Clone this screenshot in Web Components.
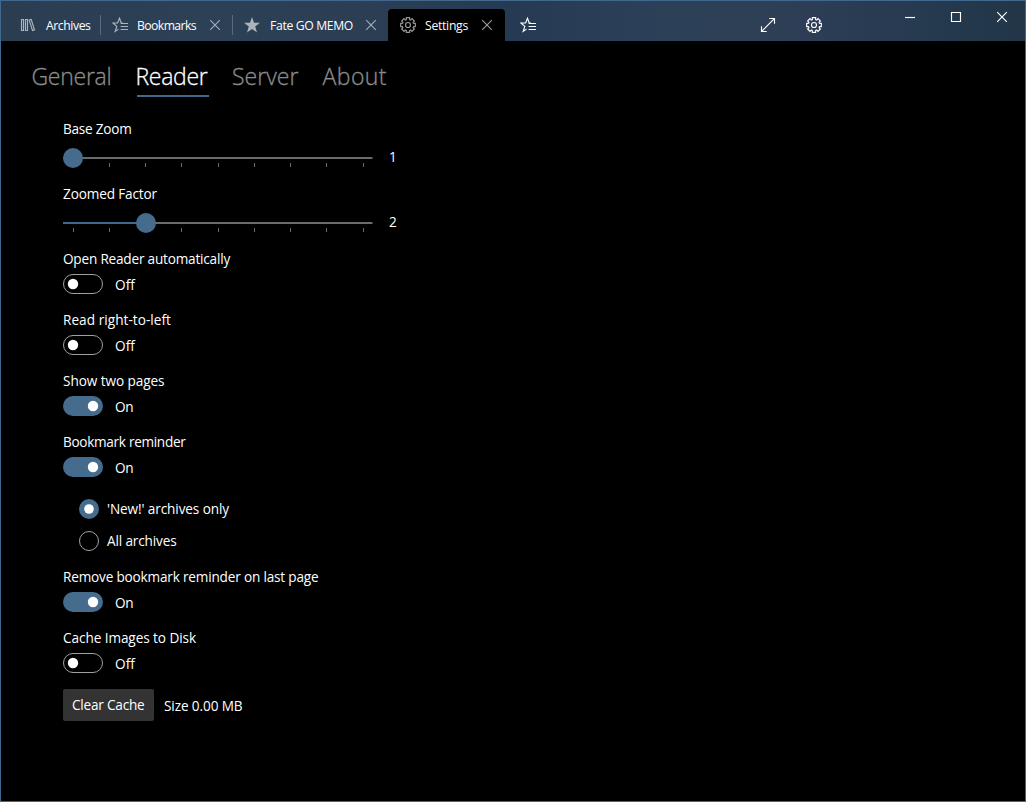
<!DOCTYPE html>
<html lang="en"><head><meta charset="utf-8"><title>Settings</title>
<style>html,body{margin:0;height:100%;background:#000;overflow:hidden}</style></head>
<body><settings-window></settings-window>
<script>
const define = (name, html, setup) => customElements.define(name, class extends HTMLElement {
  connectedCallback() {
    if (this.shadowRoot) return;
    const root = this.attachShadow({mode: 'open'});
    root.innerHTML = typeof html === 'function' ? html(this) : html;
    if (setup) setup(this, root);
  }
});

/* One line of text whose tracking is adjusted to a given width. */
define('fit-text', '<style>:host{display:block;flex:none;white-space:pre}span{display:inline-block}</style><span><slot></slot></span>', (el, root) => {
  const w = +el.getAttribute('w'), s = root.querySelector('span');
  const fit = () => {
    s.style.letterSpacing = '0';
    const nat = s.getBoundingClientRect().width;
    s.style.letterSpacing = (w - nat) / el.textContent.length + 'px';
  };
  el.style.width = w + 'px';
  requestAnimationFrame(fit);
});

let gear = '';
for (let i = 0; i < 8; i++) {
  const a = i * Math.PI / 4 - Math.PI / 2;
  const p = (r, d) => (8 + r * Math.cos(a + d)).toFixed(2) + ' ' + (8 + r * Math.sin(a + d)).toFixed(2);
  gear += (i ? 'L' : 'M') + p(5.8, -.29) + 'L' + p(7.5, -.22) + 'L' + p(7.5, .22) + 'L' + p(5.8, .29) + 'Q' + p(5.2, .3927) + ' ' + p(5.8, .495);
}
const icons = {
  library: '<path d="M1.5 2.5h2v11h-2zM5.5 2.5h2v11h-2zM9.2 3.1l2-.6 3.3 10.4-2 .6z"/>',
  favlist: '<path d="M11 6.1H9.3L7.5 1.2 5.6 6H.9l3.9 3.4-1.6 5 3.3-2.3M8.6 6.5H16M8.6 9.5H16M8.6 12.5H16"/>',
  star: '<path fill="currentColor" stroke="none" d="M8 0l2 5.7 6 .1-4.8 3.6 1.8 6L8 12l-5 3.4 1.8-6L0 5.8l6-.1z"/>',
  gear: `<path d="${gear}Z"/><circle cx="8" cy="8" r="2.5"/>`,
  x: '<path d="M3.2 3.2l9.6 9.6M12.8 3.2l-9.6 9.6"/>',
  expand: '<path d="M1.7 14.3L14.3 1.7M9.3 1.5h5.2v5.2M1.5 9.3v5.2h5.2"/>',
  min: '<path d="M3 8.5h10"/>',
  max: '<path d="M3.5 3.5h9v9h-9z"/>'
};
define('ui-icon', el => `<style>:host{display:block;flex:none;width:16px;height:16px}svg{display:block;fill:none;stroke:currentColor;stroke-width:1.15}</style><svg width="16" height="16" viewBox="0 0 16 16">${icons[el.getAttribute('name')]}</svg>`);

define('app-tab', el => `<style>
:host{display:flex;box-sizing:border-box;height:32px;align-items:center;padding-left:12px;flex:none;color:#fff;font-size:12.2px;line-height:20px}
:host([sep]){background:linear-gradient(#5b6b7c,#5b6b7c) right 0 top 6px/1px 20px no-repeat}
:host([active]){background:#000;border-radius:4px 4px 0 0}
slot{display:block;padding-top:2px}
.i{color:#abb4bd;margin-right:9px}.x{color:#a2adb8;margin-left:11px}
:host([active]) .i,:host([active]) .x{color:#999}
</style><ui-icon class="i" name="${el.getAttribute('icon')}"></ui-icon><slot></slot>${el.hasAttribute('closable') ? '<ui-icon class="x" name="x"></ui-icon>' : ''}`);

define('title-bar', `<style>
:host{display:flex;height:40px;flex:none;align-items:flex-end;padding-left:7px;background:linear-gradient(90deg,#2b3d51,#2c4056 18%,#2b3e54 36%,#263a53 50%,#2b4058 62%,#2e4056 74%,#2b3c55 82%,#263a50 90%,#223648);color:#fff}
.new{width:46px;height:32px;display:grid;place-items:center}
.sp{flex:1}.b{width:46px;height:32px;display:grid;place-items:center;flex:none}
.cap{height:32px;align-self:flex-start;width:46px;display:grid;place-items:center;flex:none}.gap{width:50px;flex:none}
</style>
<app-tab icon="library" sep style="width:93px"><fit-text w="44.5" style="margin-left:1px">Archives</fit-text></app-tab>
<app-tab icon="favlist" sep closable style="width:132px;padding-left:11px"><fit-text w="59">Bookmarks</fit-text></app-tab>
<app-tab icon="star" closable style="width:155px;padding-left:11px"><fit-text w="83" style="margin:0 -1px 0 1px">Fate GO MEMO</fit-text></app-tab>
<app-tab icon="gear" active closable style="width:117px"><fit-text w="43">Settings</fit-text></app-tab>
<div class="new"><ui-icon name="favlist"></ui-icon></div><div class="sp"></div>
<div class="b"><ui-icon name="expand"></ui-icon></div><div class="b"><ui-icon name="gear"></ui-icon></div><div class="gap"></div>
<div class="cap"><ui-icon name="min"></ui-icon></div><div class="cap"><ui-icon name="max"></ui-icon></div><div class="cap"><ui-icon name="x"></ui-icon></div>`);

define('page-nav', `<style>
:host{display:flex;font:300 23px/32px "Open Sans","Noto Sans",sans-serif;-webkit-text-stroke:.3px currentColor;color:#8c8c8c;padding:19px 0 0 30.5px;height:58px;box-sizing:border-box;gap:24px}
.on{color:#fff;height:37px;background:linear-gradient(#41698d,#41698d) 1.5px 100%/72px 2px no-repeat;width:73px;margin-right:-.5px}
</style><fit-text w="80">General</fit-text><div class="on"><fit-text w="72">Reader</fit-text></div><fit-text w="66.5">Server</fit-text><fit-text w="64.5">About</fit-text>`);

define('ui-slider', el => {
  const t = +el.getAttribute('at');
  return `<style>:host{display:flex;height:37px;align-items:flex-start;gap:16px}svg{display:block;flex:none}.v{line-height:20px;padding-top:8px}</style>
<svg width="310" height="37"><path d="M0 19h309.5" stroke="#6b6b6b" stroke-width="2"/><path d="M0 19h${t}" stroke="#41698d" stroke-width="2"/><g fill="#6b6b6b">${[10,46,82,118,155,191,227,263,300].map(x => `<rect x="${x}" y="24" width="1" height="4"/>`).join('')}</g><circle cx="${t}" cy="19" r="10" fill="#456b8d"/></svg><div class="v"><slot></slot></div>`;
});

define('ui-toggle', el => {
  const on = el.hasAttribute('on');
  return `<style>:host{display:flex;height:30px;align-items:flex-start;gap:12px}svg{display:block;margin-top:5px}fit-text{margin-top:6px;line-height:20px}</style>
<svg width="40" height="20">${on ? '<rect width="40" height="20" rx="10" fill="#456b8d"/><circle cx="30" cy="10" r="5.2" fill="#fff"/>' : '<rect x=".5" y=".5" width="39" height="19" rx="9.5" fill="none" stroke="#a0a0a0"/><circle cx="10" cy="10" r="5.2" fill="#fff"/>'}</svg><fit-text w="${on ? 18.5 : 20}">${on ? 'On' : 'Off'}</fit-text>`;
});

define('ui-radio', el => `<style>:host{display:flex;height:32px;align-items:center;gap:8px;padding-left:16px;line-height:20px}svg{display:block}</style>
<svg width="20" height="20">${el.hasAttribute('on') ? '<circle cx="10" cy="10" r="10" fill="#456b8d"/><circle cx="10" cy="10" r="4.8" fill="#fff"/>' : '<circle cx="10" cy="10" r="9.5" fill="none" stroke="#a0a0a0"/>'}</svg><slot></slot>`);

define('setting-row', el => `<style>:host{display:block;margin-bottom:11px}:host([slider]){margin-bottom:8px}fit-text{height:20px;line-height:20px}</style><fit-text w="${el.getAttribute('w')}">${el.getAttribute('label')}</fit-text><slot></slot>`);

define('reader-settings', `<style>
:host{display:block;padding:20px 0 0 62px;font-size:13.6px;line-height:20px;color:#fff}
.radios{margin-bottom:10px}.foot{display:flex;gap:10px;align-items:center}
button{font:inherit;color:inherit;background:#333;border:0;border-radius:2px;width:91px;height:32px;padding:0 0 0 9px;text-align:left}
.size{padding-top:2px}</style>
<setting-row slider label="Base Zoom" w="68.5"><ui-slider at="10">1</ui-slider></setting-row>
<setting-row slider label="Zoomed Factor" w="94"><ui-slider at="83">2</ui-slider></setting-row>
<setting-row label="Open Reader automatically" w="167"><ui-toggle></ui-toggle></setting-row>
<setting-row label="Read right-to-left" w="108"><ui-toggle></ui-toggle></setting-row>
<setting-row label="Show two pages" w="101.5"><ui-toggle on></ui-toggle></setting-row>
<setting-row label="Bookmark reminder" w="122.5"><ui-toggle on></ui-toggle></setting-row>
<div class="radios"><ui-radio on><fit-text w="122">'New!' archives only</fit-text></ui-radio><ui-radio><fit-text w="69.5">All archives</fit-text></ui-radio></div>
<setting-row label="Remove bookmark reminder on last page" w="255.5"><ui-toggle on></ui-toggle></setting-row>
<setting-row label="Cache Images to Disk" w="133"><ui-toggle></ui-toggle></setting-row>
<div class="foot"><button><fit-text w="72.5">Clear Cache</fit-text></button><fit-text class="size" w="78.5">Size 0.00 MB</fit-text></div>`);

define('settings-window', `<style>:host{display:block;box-sizing:border-box;width:1026px;height:802px;border:1px solid #41698d;background:#000;font-family:"Open Sans","Noto Sans",sans-serif}</style>
<title-bar></title-bar><page-nav></page-nav><reader-settings></reader-settings>`);
</script></body></html>
